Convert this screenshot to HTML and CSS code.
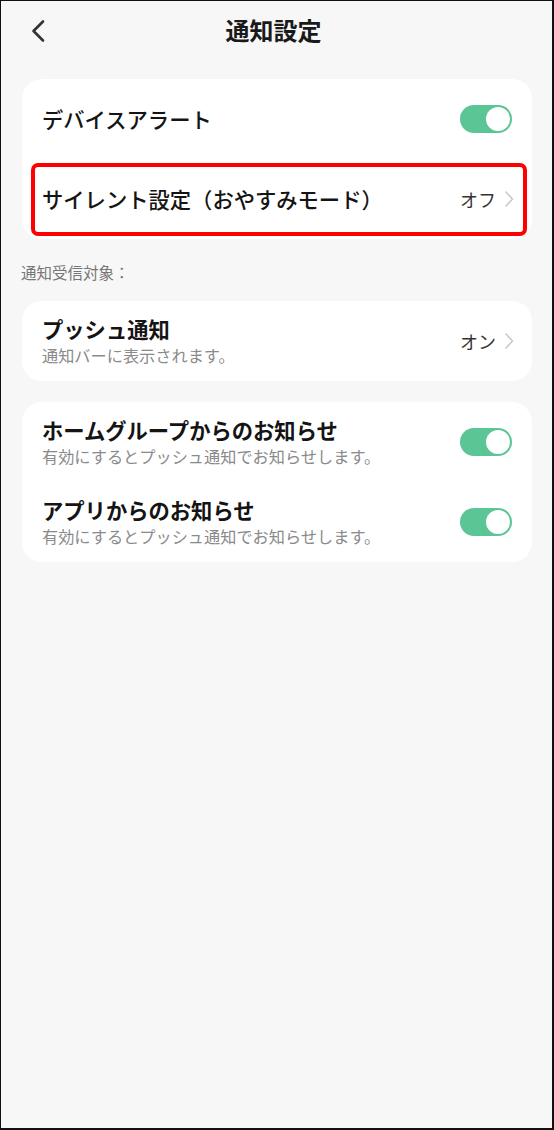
FILE: index.html
```html
<!DOCTYPE html>
<html lang="ja">
<head>
<meta charset="utf-8">
<link rel="stylesheet" href="styles.css">
</head>
<body>
<div class="frame">
  <header class="header">
    <svg class="back" width="16" height="24" viewBox="0 0 16 24"><polyline points="13,2.5 3.5,12 13,21.5" fill="none" stroke="#333" stroke-width="2.6" stroke-linecap="round" stroke-linejoin="round"/></svg>
    <h1 class="title">通知設定</h1>
  </header>

  <section class="card card-first">
    <div class="row">
      <div class="row-text"><div class="row-title medium">デバイスアラート</div></div>
      <div class="toggle"><span class="knob"></span></div>
    </div>
    <div class="row">
      <div class="row-text"><div class="row-title medium">サイレント設定（おやすみモード）</div></div>
      <div class="value">オフ<svg class="chev" width="10" height="18" viewBox="0 0 10 18"><polyline points="2,2 8.5,9 2,16" fill="none" stroke="#c8c8c8" stroke-width="1.6" stroke-linecap="round" stroke-linejoin="round"/></svg></div>
    </div>
    <div class="highlight"></div>
  </section>

  <div class="label">通知受信対象：</div>

  <section class="card">
    <div class="row">
      <div class="row-text">
        <div class="row-title">プッシュ通知</div>
        <div class="row-sub">通知バーに表示されます。</div>
      </div>
      <div class="value">オン<svg class="chev" width="10" height="18" viewBox="0 0 10 18"><polyline points="2,2 8.5,9 2,16" fill="none" stroke="#c8c8c8" stroke-width="1.6" stroke-linecap="round" stroke-linejoin="round"/></svg></div>
    </div>
  </section>

  <section class="card">
    <div class="row">
      <div class="row-text">
        <div class="row-title">ホームグループからのお知らせ</div>
        <div class="row-sub">有効にするとプッシュ通知でお知らせします。</div>
      </div>
      <div class="toggle"><span class="knob"></span></div>
    </div>
    <div class="row">
      <div class="row-text">
        <div class="row-title">アプリからのお知らせ</div>
        <div class="row-sub">有効にするとプッシュ通知でお知らせします。</div>
      </div>
      <div class="toggle"><span class="knob"></span></div>
    </div>
  </section>
</div>
</body>
</html>
```

FILE: styles.css
```css
html, body {
  margin: 0;
  padding: 0;
  background: #ffffff;
}
body {
  font-family: "Noto Sans CJK JP", "Noto Sans", sans-serif;
  color: #1a1a1a;
}
.frame {
  box-sizing: border-box;
  width: 554px;
  height: 1130px;
  background: #f7f7f7;
  border-left: 1px solid #111;
  border-top: 1px solid #111;
  border-right: 2px solid #111;
  border-bottom: 2px solid #111;
  overflow: hidden;
}
.header {
  position: relative;
  height: 58px;
  display: flex;
  align-items: center;
  justify-content: center;
}
.back {
  position: absolute;
  left: 29px;
  top: 18px;
}
.title {
  margin: 0;
  padding-right: 6px;
  font-size: 24px;
  font-weight: 700;
  line-height: 30px;
  color: #1a1a1a;
}
.card {
  position: relative;
  margin: 0 20px 0 21px;
  background: #ffffff;
  border-radius: 20px;
  padding: 0 20px;
}
.card-first {
  margin-top: 20px;
}
.card + .card {
  margin-top: 21px;
}
.row {
  height: 80px;
  display: flex;
  align-items: center;
  justify-content: space-between;
}
.row-text {
  display: flex;
  flex-direction: column;
}
.row-title {
  font-size: 21.3px;
  font-weight: 700;
  line-height: 24px;
  color: #141414;
  white-space: nowrap;
}
.row-title.medium {
  font-weight: 500;
}
.row-sub {
  margin-top: 4px;
  font-size: 16.2px;
  line-height: 20px;
  color: #8a8a8a;
  white-space: nowrap;
}
.value {
  display: flex;
  align-items: center;
  gap: 8px;
  font-size: 18px;
  line-height: 24px;
  color: #333;
  margin-right: -2px;
}
.chev {
  display: block;
}
.toggle {
  position: relative;
  width: 52px;
  height: 28px;
  border-radius: 14px;
  background: #5bc596;
  flex: none;
}
.knob {
  position: absolute;
  top: 2px;
  right: 2px;
  width: 24px;
  height: 24px;
  border-radius: 50%;
  background: #ffffff;
}
.highlight {
  position: absolute;
  left: 9px;
  right: 5px;
  top: 84px;
  height: 73px;
  box-sizing: border-box;
  border: 4px solid #ff0000;
  border-radius: 7px;
  pointer-events: none;
}
.label {
  margin: 22px 0 18px 20px;
  font-size: 15.5px;
  line-height: 22px;
  color: #777;
}
```
